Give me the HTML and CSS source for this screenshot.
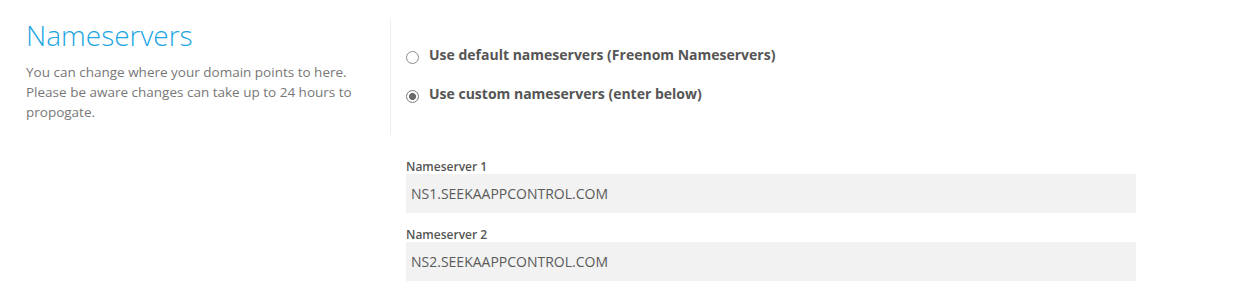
FILE: index.html
```html
<!DOCTYPE html>
<html lang="en">
<head>
<meta charset="utf-8">
<title>Nameservers</title>
<link rel="stylesheet" href="styles.css">
</head>
<body>
<div class="page">
  <div class="intro-row">
    <div class="intro">
      <h2 class="title">Nameservers</h2>
      <p class="desc">You can change where your domain points to here. Please be aware changes can take up to 24 hours to propogate.</p>
    </div>
    <div class="options">
      <label class="option">
        <input type="radio" name="ns" class="radio">
        <span>Use default nameservers (Freenom Nameservers)</span>
      </label>
      <label class="option">
        <input type="radio" name="ns" class="radio" checked>
        <span>Use custom nameservers (enter below)</span>
      </label>
    </div>
  </div>
  <div class="fields">
    <div class="field">
      <label class="field-label" for="ns1">Nameserver 1</label>
      <input id="ns1" class="field-input" type="text" value="NS1.SEEKAAPPCONTROL.COM">
    </div>
    <div class="field">
      <label class="field-label" for="ns2">Nameserver 2</label>
      <input id="ns2" class="field-input" type="text" value="NS2.SEEKAAPPCONTROL.COM">
    </div>
  </div>
</div>
</body>
</html>
```

FILE: styles.css
```css
* { box-sizing: border-box; }

html, body {
  margin: 0;
  padding: 0;
  background: #ffffff;
}

body {
  font-family: "Open Sans", "Noto Sans", "Liberation Sans", sans-serif;
  color: #555555;
}

.page {
  padding-top: 19px;
}

.intro-row {
  display: flex;
}

.intro {
  width: 390px;
  flex: none;
  padding: 0 19px 0 26px;
}

.title {
  margin: -1px 0 0 0;
  font-size: 28px;
  line-height: 34px;
  font-weight: 300;
  color: #1da6e3;
}

.desc {
  margin: 10px 0 0 0;
  font-size: 13.5px;
  line-height: 20px;
  color: #777777;
}

.options {
  border-left: 1px solid #eeeeee;
  padding: 26px 0 31px 15px;
  display: flex;
  flex-direction: column;
  gap: 19px;
}

.option {
  display: flex;
  align-items: center;
  gap: 10px;
  font-size: 14px;
  line-height: 20px;
  font-weight: 700;
  color: #555555;
  cursor: pointer;
}

.radio {
  -webkit-appearance: none;
  appearance: none;
  margin: 5px 0 0 0;
  width: 13px;
  height: 13px;
  flex: none;
  border: 1px solid #8a8a8a;
  border-radius: 50%;
  background: #ffffff;
}

.radio:checked {
  background: radial-gradient(circle, #6b6b6b 0 3.2px, #ffffff 3.8px);
  border-color: #7a7a7a;
}

.fields {
  padding: 25px 0 0 406px;
  display: flex;
  flex-direction: column;
  gap: 15px;
}

.field {
  display: flex;
  flex-direction: column;
  width: 730px;
}

.field-label {
  font-size: 12px;
  line-height: 14px;
  font-weight: 600;
  color: #555555;
}

.field-input {
  height: 39px;
  border: 0;
  margin: 0;
  padding: 0 5px;
  background: #f2f2f2;
  font-family: "Open Sans", "Noto Sans", "Liberation Sans", sans-serif;
  font-size: 14px;
  color: #5a5a5a;
  outline: none;
}
```
